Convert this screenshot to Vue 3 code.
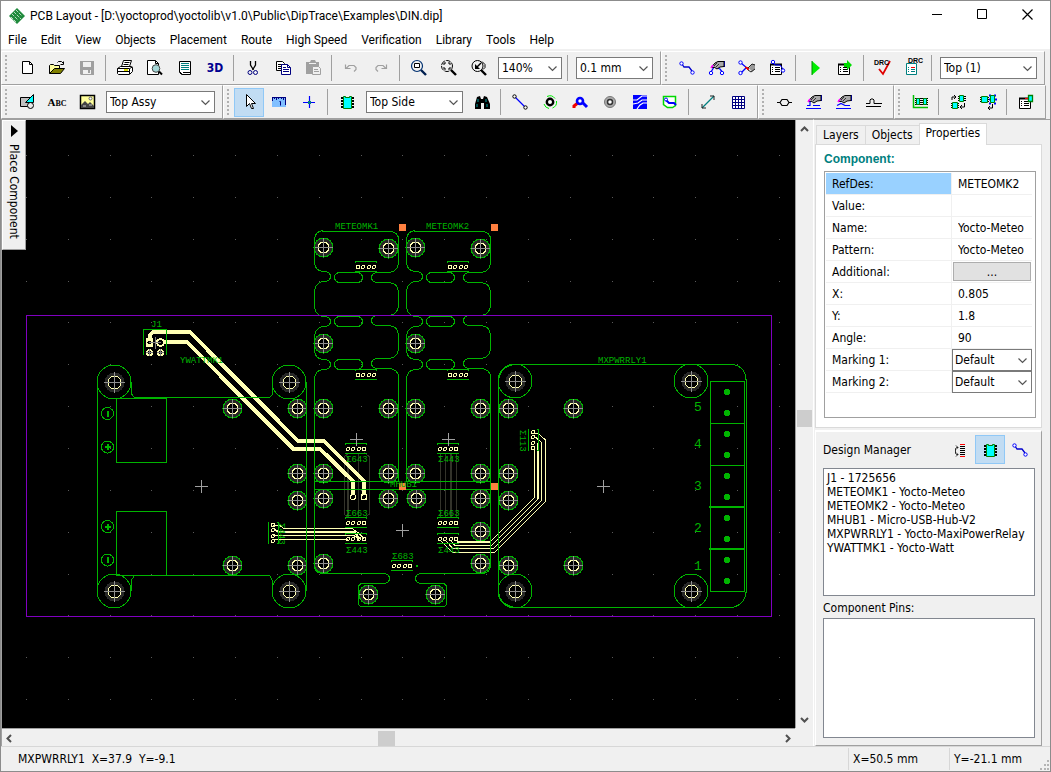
<script setup>
import { ref } from 'vue'

const menus = ['File', 'Edit', 'View', 'Objects', 'Placement', 'Route', 'High Speed', 'Verification', 'Library', 'Tools', 'Help']

const btn = (icon, label, active = false) => ({ type: 'button', icon, label, active })
const sep = { type: 'sep' }
const combo = (label, value, size) => ({ type: 'combo', label, value, size })

const toolbarRows = [
  [
    [
      btn('new', 'New'), btn('open', 'Open'), btn('save', 'Save'), sep,
      btn('print', 'Print'), btn('preview', 'Preview'), btn('titles', 'Titles'), { type: 'text', text: '3D', look: 'three-d' }, sep,
      btn('cut', 'Cut'), btn('copy', 'Copy'), btn('paste', 'Paste'), sep,
      btn('undo', 'Undo'), btn('redo', 'Redo'), sep,
      btn('zoom-window', 'Zoom window'), btn('zoom-all', 'Zoom all'), btn('zoom-back', 'Zoom back'),
      combo('Scale', '140%', 'xs'), sep, combo('Grid', '0.1 mm', 'sm')
    ],
    [
      btn('route', 'Route'), btn('edit-route', 'Edit route'), btn('cut-route', 'Cut route'), btn('route-props', 'Route properties'), sep,
      btn('run', 'Run autorouter'), btn('run-props', 'Autorouter setup'), sep,
      { ...btn('drc', 'Check DRC'), caption: 'DRC' }, { ...btn('drc-props', 'DRC rules'), caption: 'DRC', shifted: true }, sep,
      combo('Layer', 'Top (1)', 'md')
    ]
  ],
  [
    [btn('shapes', 'Shapes'), { type: 'text', text: 'Abc', look: 'abc' }, btn('picture', 'Picture'), combo('Drawing layer', 'Top Assy', 'lg')],
    [
      btn('pointer', 'Select', true), btn('ruler', 'Measure'), btn('origin', 'Origin'), sep,
      btn('chip', 'Place component'), combo('Side', 'Top Side', 'md'), btn('find', 'Find'), sep,
      btn('ratline', 'Ratline'), btn('via', 'Via'), btn('pad-route', 'Pad route'), btn('pad', 'Pad'), btn('pour', 'Copper pour'), btn('outline', 'Outline'), sep,
      btn('distance', 'Dimension'), btn('grid', 'Table')
    ],
    [btn('pair', 'Pair'), btn('pair-edit', 'Edit pair'), btn('pair-free', 'Free edit'), btn('meander', 'Meander')],
    [btn('arrange', 'Arrange'), sep, btn('place-run', 'Place run'), btn('place-auto', 'Auto placement'), sep, btn('place-props', 'Placement setup')]
  ]
]

const tabs = ['Layers', 'Objects', 'Properties']
const activeTab = ref('Properties')
const properties = [
  { id: 'refdes', label: 'RefDes:', value: 'METEOMK2', kind: 'input', selected: true },
  { id: 'value', label: 'Value:', value: '', kind: 'input' },
  { id: 'name', label: 'Name:', value: 'Yocto-Meteo', kind: 'input' },
  { id: 'pattern', label: 'Pattern:', value: 'Yocto-Meteo', kind: 'input' },
  { id: 'additional', label: 'Additional:', value: '...', kind: 'button' },
  { id: 'x', label: 'X:', value: '0.805', kind: 'input' },
  { id: 'y', label: 'Y:', value: '1.8', kind: 'input' },
  { id: 'angle', label: 'Angle:', value: '90', kind: 'input' },
  { id: 'm1', label: 'Marking 1:', value: 'Default', kind: 'select' },
  { id: 'm2', label: 'Marking 2:', value: 'Default', kind: 'select' }
]
const components = [
  'J1 - 1725656', 'METEOMK1 - Yocto-Meteo', 'METEOMK2 - Yocto-Meteo',
  'MHUB1 - Micro-USB-Hub-V2', 'MXPWRRLY1 - Yocto-MaxiPowerRelay', 'YWATTMK1 - Yocto-Watt'
]

/* Board geometry, in canvas units */
const gridDots = []
for (let r = 0; r < 14; r++) {
  for (let c = 0; c < 19; c++) {
    gridDots.push({ x: 26 + Math.round(c * 41.83), y: 155 + Math.round(r * 41.85) })
  }
}
const smallHoles = [
  [232, 408], [297, 408], [297, 473], [297, 500], [232, 565], [297, 565],
  [323, 247], [388, 248], [323, 343], [323, 408], [388, 408], [323, 473], [388, 473],
  [415, 247], [480, 248], [415, 343], [415, 408], [480, 408], [415, 473], [480, 473],
  [323, 498], [388, 498], [416, 498], [480, 498], [480, 531], [323, 563], [480, 563], [368, 594], [435, 594],
  [508, 408], [573, 408], [508, 473], [508, 500], [508, 565], [573, 565]
]
const bigHoles = [[114, 382], [289, 382], [114, 591], [289, 591], [515, 381], [691, 381], [515, 591], [691, 591]]
const headers = [
  { x: 366, y: 267, lead: true }, { x: 458, y: 267, lead: true },
  { x: 366, y: 375, lead: true }, { x: 458, y: 375, lead: true },
  { x: 356, y: 449 }, { x: 448, y: 449 }, { x: 356, y: 523 }, { x: 448, y: 523 },
  { x: 356, y: 539 }, { x: 448, y: 539 }, { x: 402, y: 566 },
  { x: 273, y: 533, turn: 90, lead: true }, { x: 533, y: 440, turn: 90 }
]
const crosses = [[202, 487], [357, 440], [449, 440], [403, 531], [604, 487]]
const anchors = [[399, 224], [491, 224], [399, 483], [491, 483]]
const terminals = [392, 413, 434, 455, 476, 497, 518, 539, 560, 581]
const designators = [
  ['J1', 151, 327], ['METEOMK1', 335, 229], ['METEOMK2', 426, 229], ['YWATTMK1', 180, 363],
  ['MXPWRRLY1', 598, 363], ['MHUB1', 390, 487],
  ['Σ643', 346, 462], ['Σ443', 438, 462], ['Σ663', 346, 516], ['Σ663', 438, 516],
  ['Σ443', 346, 553], ['Σ443', 438, 553], ['Σ683', 392, 559]
]
const relayNumbers = [['5', 411], ['4', 448], ['3', 490], ['2', 532], ['1', 570]]
</script>

<template>
  <div class="window">
    <svg class="defs" width="0" height="0" aria-hidden="true">
      <symbol id="i-new" viewBox="0 0 20 20"><path d="M5.500 3.500h7l3 3v9h-10z" fill="#fff" stroke="#000" /><path d="M12.500 3.500v3h3" fill="none" stroke="#000" /></symbol>
      <symbol id="i-open" viewBox="0 0 20 20"><path d="M2.500 15.500v-8l1-1h3l1 1h5v3" fill="#ffff9c" stroke="#000" /><path d="M2.500 15.500l5-5h10l-4 5z" fill="#808000" stroke="#000" /><path d="M10.500 4.500l1-1h3l2 2m0-2v3h-3" fill="none" stroke="#000" /></symbol>
      <symbol id="i-save" viewBox="0 0 20 20"><path d="M3 3h14v14H4l-1-1z" fill="#a0a0a0" /><path d="M6 4h8v5H6zM6 12h8v4H6z" fill="#f0f0f0" /><path d="M11 12h2v3h-2z" fill="#a0a0a0" /></symbol>
      <symbol id="i-print" viewBox="0 0 20 20"><path d="M6.500 8.500l2-6h8l-2 6z" fill="#fff" stroke="#000" /><path d="M9.500 4.500h5M8.500 6.500h5" stroke="#000" /><path d="M2.500 10.500l3-2h11l1 1v4l-3 3h-11l-1-1z" fill="#fff" stroke="#000" /><path d="M2.500 10.500h12l3-1.500M14.500 11v5M3 13.500h11" fill="none" stroke="#000" /><path d="M9 11h4v2H9z" fill="#e0e000" /></symbol>
      <symbol id="i-preview" viewBox="0 0 20 20"><path d="M2.500 2.500h8l3 3v11h-11z" fill="#fff" stroke="#000" /><path d="M10.500 2.500v3h3" fill="none" stroke="#000" /><circle cx="11" cy="10.500" r="3.800" fill="#a5d8d8" stroke="#444" /><path d="M14 13.500l3 3" stroke="#000" stroke-width="2" /></symbol>
      <symbol id="i-titles" viewBox="0 0 20 20"><path d="M4.500 3.500h11v13h-9l-2-2z" fill="#fff" stroke="#000" /><path d="M6 5.500h8M6 7.500h8M6 9.500h8M6 11.500h8" stroke="#008080" /><path d="M8 14.500h7M4.500 13.500l3 3" stroke="#000" /></symbol>
      <symbol id="i-cut" viewBox="0 0 20 20"><path d="M7.500 3v4l3 5M12.500 3v4l-3 5" fill="none" stroke="#000" stroke-width="1.300" /><circle cx="7" cy="14.500" r="2" fill="none" stroke="#000080" /><circle cx="12.500" cy="14.500" r="2" fill="none" stroke="#000080" /></symbol>
      <symbol id="i-copy" viewBox="0 0 20 20"><path d="M3.500 3.500h6l2 2v7h-8z" fill="#fff" stroke="#000" /><path d="M5 6.500h4M5 8.500h3M5 10.500h3" stroke="#000" /><path d="M8.500 6.500h6l3 3v7h-9z" fill="#fff" stroke="#000080" /><path d="M14.500 6.500v3h3M10 9.500h3M10 11.500h6M10 13.500h6" fill="none" stroke="#000080" /></symbol>
      <symbol id="i-paste" viewBox="0 0 20 20"><path d="M3 4h4l1-2h4l1 2h3v12H3z" fill="#a0a0a0" /><path d="M6 5h7v1H6z" fill="#f0f0f0" /><path d="M9.500 8.500h6l2 2v6h-8z" fill="#f0f0f0" stroke="#a0a0a0" /><path d="M11 11.500h4M11 13.500h5" stroke="#a0a0a0" /></symbol>
      <symbol id="i-undo" viewBox="0 0 20 20"><path d="M5 10.500l3-3h5l2 2v2l-2 2M4.500 6.500v4h5" fill="none" stroke="#a0a0a0" stroke-width="1.200" /></symbol>
      <symbol id="i-redo" viewBox="0 0 20 20"><path d="M15 10.500l-3-3H7l-2 2v2l2 2M15.500 6.500v4h-5" fill="none" stroke="#a0a0a0" stroke-width="1.200" /></symbol>
      <symbol id="i-zoom-window" viewBox="0 0 20 20"><circle cx="8" cy="8" r="5.500" fill="none" stroke="#003070" stroke-width="1.200" /><path d="M5.500 5.500h5v4h-5z" fill="#fff" stroke="#000" /><path d="M12 12l5 5" stroke="#002050" stroke-width="2.400" /></symbol>
      <symbol id="i-zoom-all" viewBox="0 0 20 20"><circle cx="8" cy="8" r="5.500" fill="none" stroke="#000" stroke-dasharray="5 1" /><path d="M5 7V5h2M9 5h2v2M5 9v2h2M11 9v2H9" fill="none" stroke="#000" /><path d="M12 12l5 5" stroke="#000" stroke-width="2.400" /></symbol>
      <symbol id="i-zoom-back" viewBox="0 0 20 20"><circle cx="8.500" cy="8" r="5.500" fill="none" stroke="#000" /><path d="M13 3.500l3 3v3l-2 2" fill="none" stroke="#000" /><path d="M6 6v5h5z" fill="#000" /><path d="M7 10l5-5" stroke="#000" stroke-width="1.500" /><path d="M12 12l5 5" stroke="#000" stroke-width="2.400" /></symbol>
      <symbol id="i-route" viewBox="0 0 20 20"><path d="M5 6l2 3h5l3 4" fill="none" stroke="#00c" stroke-width="1.300" /><circle cx="4.500" cy="5.500" r="1.700" fill="#fff" stroke="#00f" /><circle cx="15.500" cy="14.500" r="1.700" fill="#fff" stroke="#00f" /></symbol>
      <symbol id="i-hand" viewBox="0 0 20 20"><path d="M5 8.500l3-3.500 3-1.500h6v5l-4 .5-3 2-3-2-1 1z" fill="#a8a8a8" stroke="#000" /><path d="M7 8l3-3M9 9l3-3" stroke="#333" /><path d="M17.500 3v6" stroke="#000080" /><path d="M4 10l2-3" stroke="#f0f" stroke-width="1.500" /></symbol>
      <symbol id="i-edit-route" viewBox="0 0 20 20"><path d="M4 14l3-5 6 2 3 4" fill="none" stroke="#00f" stroke-width="1.300" /><use href="#i-hand" width="20" height="20" /><circle cx="4" cy="15" r="1.700" fill="#fff" stroke="#00f" /><circle cx="15" cy="15" r="1.700" fill="#fff" stroke="#00f" /></symbol>
      <symbol id="i-cut-route" viewBox="0 0 20 20"><path d="M4 5l6 5h-1l-5 5" fill="none" stroke="#00f" stroke-width="1.300" /><path d="M8 9l4 1-1 2z" fill="#e00" stroke="#e00" /><circle cx="3.500" cy="4.500" r="1.700" fill="#fff" stroke="#00f" /><circle cx="3.500" cy="15" r="1.700" fill="#fff" stroke="#00f" /><path d="M12 10l3-4h3v5l-3 3z" fill="#999" /><path d="M11 10l4-4 3 1M11 12l3 2 4-3" fill="none" stroke="#222" /></symbol>
      <symbol id="i-sheet" viewBox="0 0 20 20"><path d="M3.500 6.500h11v10h-11z" fill="#fff" stroke="#000" /><path d="M3 5.500h12v2H3z" fill="#000" /><path d="M5 9.500h1M5 11.500h1M5 13.500h1M8 9.500h5M8 11.500h5M8 13.500h5" stroke="#000" /></symbol>
      <symbol id="i-route-props" viewBox="0 0 20 20"><use href="#i-sheet" width="20" height="20" /><path d="M6 4l2 3h5l3 4" fill="none" stroke="#00f" /><circle cx="6" cy="4" r="1.700" fill="#fff" stroke="#00f" /><circle cx="16" cy="12.500" r="1.700" fill="#fff" stroke="#00f" /></symbol>
      <symbol id="i-run" viewBox="0 0 20 20"><path d="M7 3l8 7-8 7z" fill="#0e0" /><path d="M7 3v14" stroke="#080" /></symbol>
      <symbol id="i-run-props" viewBox="0 0 20 20"><use href="#i-sheet" width="20" height="20" /><path d="M9 5h3V2l5 5-5 5V9H9z" fill="#0d0" /></symbol>
      <symbol id="i-drc" viewBox="0 0 20 20"><path d="M6 11l4 5 7-13" fill="none" stroke="#e00000" stroke-width="1.800" /></symbol>
      <symbol id="i-drc-props" viewBox="0 0 20 20"><path d="M3.500 5.500h10v11h-10z" fill="#fff" stroke="#008080" /><path d="M5 9.500h1M5 11.500h1M5 13.500h1M8 11.500h4M8 13.500h4" stroke="#008080" /><path d="M8 9.500h4" stroke="#e00" /></symbol>
      <symbol id="i-shapes" viewBox="0 0 20 20"><path d="M3.500 5.500h10v9h-10z" fill="#c0c0c0" stroke="#000" /><path d="M16.500 2.500v8h-8z" fill="#0ff" stroke="#000" /><circle cx="13.500" cy="13.500" r="3" fill="#e8e8e8" stroke="#000" /></symbol>
      <symbol id="i-picture" viewBox="0 0 20 20"><path d="M3.500 3.500h14v13h-14z" fill="#ffff9c" stroke="#000" stroke-width="1.500" /><circle cx="13.500" cy="6.500" r="1.500" fill="#fff" stroke="#666" /><path d="M4 13l4-4 3 3 2-2 4 4v2H4z" fill="#444" /><path d="M6 14h3M12 13h3" stroke="#ccc" /></symbol>
      <symbol id="i-pointer" viewBox="0 0 20 20"><path d="M7.500 2.500v12l3-3 2 5h2l-2-5h4z" fill="#fff" stroke="#000" /></symbol>
      <symbol id="i-ruler" viewBox="0 0 20 20"><path d="M3 5h14v10H3z" fill="#80bfff" /><path d="M3 5.500h14M3.500 5v4M5.500 5v2M7.500 5v3M9.500 5v2M12.500 5v2M14.500 5v3M16.500 5v8M10.500 9.500h1v4" fill="none" stroke="#000080" /></symbol>
      <symbol id="i-origin" viewBox="0 0 20 20"><path d="M4 10.500h12M10.500 4v12" stroke="#0000ff" stroke-width="1.200" /><path d="M9 9h3v3H9z" fill="#008080" /></symbol>
      <symbol id="i-chip" viewBox="0 0 20 20"><path d="M4 6h13M4 9h13M4 12h13M4 15h13" stroke="#000" stroke-width="2" /><path d="M6.500 4.500h2v1h4v-1h2v12h-8z" fill="#0ff" stroke="#008000" /></symbol>
      <symbol id="i-find" viewBox="0 0 20 20"><path d="M5 5l3-1 1 3h2l1-3 3 1 3 7v5h-6v-6H9v6H3v-5z" fill="#000" /><path d="M6 7v3M14 7v3M5 12v3M15 12v3" stroke="#00a0a0" /></symbol>
      <symbol id="i-ratline" viewBox="0 0 20 20"><path d="M5 5l10 10" stroke="#00f" stroke-width="1.200" /><circle cx="4.500" cy="4.500" r="1.700" fill="#fff" stroke="#000" /><circle cx="15.500" cy="15.500" r="1.700" fill="#fff" stroke="#000" /></symbol>
      <symbol id="i-via" viewBox="0 0 20 20"><path d="M7 4.500a6.500 6.500 0 0 1 8 2M16.500 9a6.500 6.500 0 0 1-4 7M4 12a6.500 6.500 0 0 0 5 4.500" fill="none" stroke="#0e0" /><circle cx="10" cy="10" r="3.200" fill="#fff" stroke="#000" stroke-width="2.400" /></symbol>
      <symbol id="i-pad-route" viewBox="0 0 20 20"><path d="M9 10l-5 4v2" fill="none" stroke="#f00000" stroke-width="3" /><path d="M11 9l6 6" stroke="#00f" stroke-width="3" /><circle cx="10" cy="9" r="3" fill="#fff" stroke="#00f" stroke-width="2.600" /></symbol>
      <symbol id="i-pad" viewBox="0 0 20 20"><circle cx="10" cy="10" r="5.500" fill="#aaa" stroke="#777" /><circle cx="10" cy="10" r="2.500" fill="#fff" stroke="#333" stroke-width="1.500" /></symbol>
      <symbol id="i-pour" viewBox="0 0 20 20"><path d="M3 3h14v14H3z" fill="#00f" /><path d="M3 8h4l5-4h5M3 12l5-1 4-3h5M7 17l3-4 3-2h4" fill="none" stroke="#fff" stroke-width="1.200" /></symbol>
      <symbol id="i-outline" viewBox="0 0 20 20"><path d="M3.500 4.500h12v9l-3 2h-5l-4-3z" fill="#fff" stroke="#00d800" stroke-width="1.500" /><path d="M6 8l3 3h5l2 2" fill="none" stroke="#00f" stroke-width="2" /><circle cx="6" cy="7.500" r="1.500" fill="#fff" stroke="#00f" /></symbol>
      <symbol id="i-distance" viewBox="0 0 20 20"><path d="M4 16L16 4" stroke="#008080" stroke-width="1.300" /><path d="M12 4h4v4M4 12v4h4" fill="none" stroke="#222" /></symbol>
      <symbol id="i-grid" viewBox="0 0 20 20"><path d="M4.500 4.500h12v12h-12zM7.500 4v12M10.500 4v12M13.500 4v12M4 7.500h12M4 10.500h12M4 13.500h12" fill="#fff" stroke="#000080" /></symbol>
      <symbol id="i-pair" viewBox="0 0 20 20"><path d="M3 10.500h3l2-3h5l2 3h3M6 10.500l2 3h5l2-3" fill="none" stroke="#000" stroke-width="1.200" /></symbol>
      <symbol id="i-pair-edit" viewBox="0 0 20 20"><use href="#i-hand" width="20" height="20" /><path d="M2 16.500h15M3 13.500h3v-4M9 13.500h7" fill="none" stroke="#00f" stroke-width="1.200" /></symbol>
      <symbol id="i-pair-free" viewBox="0 0 20 20"><use href="#i-hand" width="20" height="20" /><path d="M2 16.500h15M3 13.500l4-2 4 2h5" fill="none" stroke="#00f" stroke-width="1.200" /></symbol>
      <symbol id="i-meander" viewBox="0 0 20 20"><path d="M2 11.500h4V8l1-1h2l1 1v3.500h8M2 14.500h15" fill="none" stroke="#000" /></symbol>
      <symbol id="i-arrange" viewBox="0 0 20 20"><path d="M3.500 3v12.500H18" fill="none" stroke="#00c000" stroke-width="1.500" /><path d="M5 6.500h13M5 8.500h13M5 10.500h13M5 12.500h13" stroke="#000" /><path d="M6.500 6.500h3v6h-3zM13.500 6.500h3v6h-3z" fill="#0ff" stroke="#008000" /></symbol>
      <symbol id="i-place-run" viewBox="0 0 20 20"><path d="M3 11.500h8M3 13.500h8M3 15.500h8M10 4.500h8M10 6.500h8M10 8.500h8" stroke="#000" /><path d="M4.500 10.500h5v6h-5zM11.500 3.500h4v6h-4z" fill="#0ff" stroke="#008000" /><path d="M4 8V5h4M6 3l2 2-2 2M16.500 11v4h-4M14 13l-2 2 2 2" fill="none" stroke="#000" /></symbol>
      <symbol id="i-place-auto" viewBox="0 0 20 20"><path d="M2 5.500h9M2 7.500h9M2 9.500h9" stroke="#000" /><path d="M11 3.500h2M16 3.500h2M11 7.500h8M11 11.500h2M16 11.500h2" stroke="#00f" stroke-width="2" /><path d="M3.500 4.500h6v6h-6zM12.500 3.500h4v7h-4z" fill="#0ff" stroke="#008000" /><path d="M14.500 12v4h-4M12 14l-2 2 2 2" fill="none" stroke="#000" /></symbol>
      <symbol id="i-place-props" viewBox="0 0 20 20"><use href="#i-sheet" width="20" height="20" /><path d="M9 6.500h3" stroke="#f00" /><path d="M12.500 3.500h4v6h-4z" fill="#0ff" stroke="#008000" stroke-width="1.300" /></symbol>
      <symbol id="i-sort" viewBox="0 0 20 20"><path d="M10 4.500h5M10 16.500h5" stroke="#f00" /><path d="M10 6.500h5M10 8.500h5M10 10.500h5M10 12.500h5M10 14.500h5" stroke="#000" /><path d="M8 7.500H6.500l-1 1v5l1 1H8M6 5.500l2 2-2 2M6 12.500l2 2-2 2" fill="none" stroke="#000" stroke-width=".8" /></symbol>
      <symbol id="i-chevron" viewBox="0 0 9 6"><path d="M.5.500l4 4 4-4" fill="none" stroke="#555" stroke-width="1.200" /></symbol>
      <symbol id="b-hole" viewBox="-11 -11 22 22">
        <circle cx=".5" cy=".5" r="9.500" fill="#282828" stroke="#00b400" /><circle cx=".5" cy=".5" r="5.500" fill="#000" stroke="#ffffb4" /><path d="M-9 .5H10M.5-9V10" stroke="#909090" />
      </symbol>
      <symbol id="b-big-hole" viewBox="-18 -18 36 36">
        <circle r="17" fill="#000" stroke="#00b400" /><circle cx=".5" cy=".5" r="10" fill="#282828" /><circle cx=".5" cy=".5" r="6.500" fill="#000" stroke="#ffffb4" /><path d="M-10 .5H11M.5-10V11" stroke="#909090" />
      </symbol>
    </svg>

    <header class="titlebar">
      <svg class="logo" viewBox="0 0 18 18" width="18" height="18"><path d="M9 1l8 8-8 8-8-8z" fill="#1f8a3c" /><path d="M4 7l6 6M6 5l7 7M8 3l6 6M3 10l5 5" stroke="#b9dfc2" stroke-dasharray="3 1" /></svg>
      <h1>PCB Layout - [D:\yoctoprod\yoctolib\v1.0\Public\DipTrace\Examples\DIN.dip]</h1>
      <div class="controls">
        <button aria-label="Minimize"><svg width="11" height="11"><path d="M0 5.500h10" stroke="#000" /></svg></button>
        <button aria-label="Maximize"><svg width="11" height="11"><path d="M.5.500h9v9h-9z" fill="none" stroke="#000" /></svg></button>
        <button aria-label="Close"><svg width="11" height="11"><path d="M.5.500l10 10M10.500.500l-10 10" stroke="#000" stroke-width="1.200" /></svg></button>
      </div>
    </header>

    <nav class="menubar">
      <button v-for="m in menus" :key="m">{{ m }}</button>
    </nav>

    <div v-for="(row, r) in toolbarRows" :key="r" class="toolbar-row">
      <div v-for="(bar, b) in row" :key="b" class="toolbar" role="toolbar">
        <span class="grip"></span>
        <template v-for="(item, i) in bar" :key="i">
          <span v-if="item.type === 'sep'" class="sep"></span>
          <button v-else-if="item.type === 'text'" class="tool" :class="item.look">{{ item.text }}</button>
          <span v-else-if="item.type === 'combo'" class="combo" :class="item.size">
            <select :aria-label="item.label"><option>{{ item.value }}</option></select>
            <svg width="9" height="6"><use href="#i-chevron" /></svg>
          </span>
          <button v-else class="tool" :class="{ active: item.active }" :aria-label="item.label">
            <svg width="20" height="20"><use :href="'#i-' + item.icon" /></svg>
            <span v-if="item.caption" class="caption" :class="{ shifted: item.shifted }">{{ item.caption }}</span>
          </button>
        </template>
      </div>
    </div>

    <main class="workspace">
      <section class="canvas-pane">
        <div class="canvas">
          <svg class="board" width="100%" height="100%">
            <g transform="translate(-2 -120)" shape-rendering="crispEdges">
              <rect v-for="(d, i) in gridDots" :key="i" :x="d.x" :y="d.y" width="1" height="1" fill="#5a5a5a" />
              <g fill="none" stroke="#33332a">
                <path d="M349 453l-5 4v57l5 4M358.500 454v64M364 452l5.500 5v57l-5 4M440.500 454v64M445.500 454v64M456.500 454v64" />
                <path d="M348 456v62M451 454v64" stroke-width="2" />
              </g>
              <use v-for="(h, i) in bigHoles" :key="'b' + i" href="#b-big-hole" :x="h[0] - 18" :y="h[1] - 18" width="36" height="36" />
              <use v-for="(h, i) in smallHoles" :key="'s' + i" href="#b-hole" :x="h[0] - 11" :y="h[1] - 11" width="22" height="22" />

              <g fill="none" stroke="#ffffb4">
                <path d="M150 344v-9l3-3h37l108 109h26l40 40v15M160 342h27l106.500 107h26.500l33 32v15" stroke-width="4" />
                <path d="M273 525h6l5 3.500h68l6 4 6 6M273 535.500h81l5 4M273 539.500h75" />
                <path d="M275 530l5 2h75l4 7" stroke-width="2" />
                <path d="M457 542h33l44.500-44.500V450" /><path d="M457 542h33" stroke-width="2" />
                <path d="M450 540l5 5.500h36.500L538 499" /><path d="M538 499v-56" stroke-width="2" />
                <path d="M445 540l8 8.500h40.500l48-48v-58l-8-7M440 540l12 12h43l50.500-50.500V440l-8-7h-5" />
              </g>

              <g fill="none" stroke="#00b400">
                <path d="M97.500 382v209M306.500 382v209M131.500 382v12l3 3.500h135l3-3V382M131.500 591v-11l3-4.500h135l3 5v10.500" />
                <path d="M116.500 398.500h50v64h-50zM116.500 511.500h50v64h-50z" />
                <circle cx="107.500" cy="413.500" r="6" /><circle cx="107.500" cy="447" r="6" /><circle cx="107.500" cy="526.500" r="6" /><circle cx="107.500" cy="560" r="6" />
                <path d="M107.500 411v6M107.500 557v6" stroke-width="2" /><path d="M104.500 447h6M107.500 444v6M104.500 526.500h6M107.500 523.500v6" stroke-width="2" />
                <g v-for="dx in [0, 92]" :key="dx" :transform="`translate(${dx} 0)`">
                  <path d="M322.500 231.500h68q8 1 8 8v24q-1 8-9 9h-13q-5 1-5 5t5 5h13q8 1 9 9v14q-1 9-9 10h-13q-5 1-5 5t5 5h13q8 1 9 9v15q-1 8-9 9h-13q-5 1-5 5t5 5h13q9 1 9 9v103.500h-84V378.500q1-8 8-9h3q5-1 5-5t-5-5h-3q-7-1-8-8v-16q1-7 8-9h3q5-1 5-5t-5-5h-3q-7-2-8-9v-17q1-7 8-9h3q5-1 5-5t-5-5h-3q-7-1-8-8v-25q1-7 8-8z" />
                  <rect x="334.500" y="272.500" width="28" height="10" rx="5" /><rect x="334.500" y="316.500" width="28" height="10" rx="5" /><rect x="334.500" y="359.500" width="28" height="10" rx="5" />
                </g>
                <path d="M314.500 489.500h176v77q-1 6-7 7h-63q-5 1-5 5t5 5h22q4 0 4 4v15q0 4-4 4h-80q-4 0-4-4v-15q0-4 4-4h22q5-1 5-5t-5-5h-63q-7-1-7-7zM314.500 480v10M490.500 480v10" />
                <path d="M515 364.500h218q12 2 13 15v213q-1 12-14 15H515q-16-3-16.500-16V381q1-15 16.500-16.500z" />
                <path d="M710.500 381.500h34v210h-34zM710 423.500h34M710 465.500h34" /><path d="M709 507h35M709 549h35" stroke-width="2" />
                <path d="M143.500 355v-25.500h23V355" />
              </g>
              <g fill="#00b400"><circle v-for="y in terminals" :key="y" cx="727" :cy="y" r="3" /><rect x="416" y="565" width="2" height="2" /></g>

              <g v-for="(h, i) in headers" :key="'h' + i" :transform="`translate(${h.x} ${h.y}) rotate(${h.turn || 0})`" fill="none">
                <path d="M-10.500-4v-1.500h21V-4M-10.500 4v.5h21V4" stroke="#00b400" />
                <g stroke="#ffffb4">
                  <rect v-for="p in [-4.500, 1.500]" :key="p" :x="p" y="-1.500" width="3" height="3" rx="1.500" />
                  <rect :x="h.lead ? 6.500 : -9.500" y="-1.500" width="3" height="3" rx="1.500" />
                  <rect :x="h.lead ? -9.500 : 6.500" y="-1.500" width="3" height="3" />
                </g>
              </g>

              <g fill="#ffffb4">
                <rect x="146" y="338" width="7" height="9" /><circle cx="160.500" cy="342.500" r="4.500" /><circle cx="149.500" cy="352.500" r="3.500" /><circle cx="160.500" cy="352.500" r="3.500" />
                <circle cx="353" cy="497" r="3" /><rect x="361" y="494" width="6" height="6" />
              </g>
              <g fill="#000"><circle cx="149.500" cy="342.500" r="2" /><circle cx="160.500" cy="342.500" r="2.500" /><circle cx="353" cy="497" r="2" /><circle cx="364" cy="497" r="2" /><circle cx="149.500" cy="352.500" r="2" /><circle cx="160.500" cy="352.500" r="2" /></g>
              <path d="M149 342.500h12M155.500 337v12M146 352.500h7M149.500 349v7M157 352.500h7M160.500 349v7" stroke="#808080" />
              <path v-for="(c, i) in crosses" :key="'c' + i" :d="`M${c[0] - 7} ${c[1] - 0.5}h13M${c[0] - 0.5} ${c[1] - 7}v13`" stroke="#a0a0a0" />
              <rect v-for="(a, i) in anchors" :key="'a' + i" :x="a[0]" :y="a[1]" width="7" height="7" fill="#ff8040" />
              <rect x="26.500" y="315.500" width="745" height="301" fill="none" stroke="#8000c0" />
              <g class="silk">
                <text v-for="(t, i) in designators" :key="'t' + i" :x="t[1]" :y="t[2]">{{ t[0] }}</text>
                <text transform="translate(279 523) rotate(90)">Σ443</text>
                <text transform="translate(520 430) rotate(90)">Σ113</text>
                <text v-for="n in relayNumbers" :key="n[0]" class="relay" x="694" :y="n[1]">{{ n[0] }}</text>
              </g>
            </g>
          </svg>
          <button class="place-tab"><span class="triangle"></span><span>Place Component</span></button>
        </div>
        <div class="scroll vertical">
          <svg width="9" height="6"><path d="M1 5l3.500-3.500L8 5" fill="none" stroke="#505050" stroke-width="2" /></svg>
          <span class="thumb"></span>
          <svg width="9" height="6"><path d="M1 1l3.500 3.500L8 1" fill="none" stroke="#505050" stroke-width="2" /></svg>
        </div>
        <div class="scroll horizontal">
          <svg width="6" height="9"><path d="M5 1L1.500 4.500 5 8" fill="none" stroke="#505050" stroke-width="2" /></svg>
          <span class="thumb"></span>
          <svg width="6" height="9"><path d="M1 1l3.500 3.500L1 8" fill="none" stroke="#505050" stroke-width="2" /></svg>
        </div>
      </section>

      <aside class="side">
        <div class="tabs" role="tablist">
          <button v-for="t in tabs" :key="t" role="tab" :aria-selected="t === activeTab" :class="{ active: t === activeTab }" @click="activeTab = t">{{ t }}</button>
        </div>
        <section class="page">
          <h2>Component:</h2>
          <div class="grid-box">
            <table>
              <tbody>
                <tr v-for="p in properties" :key="p.id">
                  <th scope="row" :class="{ selected: p.selected }"><label :for="'p-' + p.id">{{ p.label }}</label></th>
                  <td>
                    <input v-if="p.kind === 'input'" :id="'p-' + p.id" type="text" :value="p.value">
                    <button v-else-if="p.kind === 'button'" :id="'p-' + p.id" class="more">{{ p.value }}</button>
                    <span v-else class="combo cell">
                      <select :id="'p-' + p.id"><option>{{ p.value }}</option></select>
                      <svg width="9" height="6"><use href="#i-chevron" /></svg>
                    </span>
                  </td>
                </tr>
              </tbody>
            </table>
          </div>
        </section>

        <section class="manager">
          <div class="manager-head">
            <h3>Design Manager</h3>
            <button class="tool" aria-label="Sort"><svg width="20" height="20"><use href="#i-sort" /></svg></button>
            <button class="tool active" aria-label="Components"><svg width="20" height="20"><use href="#i-chip" /></svg></button>
            <button class="tool" aria-label="Nets"><svg width="20" height="20"><use href="#i-route" /></svg></button>
          </div>
          <ul class="list"><li v-for="c in components" :key="c">{{ c }}</li></ul>
          <h3 class="pins-title">Component Pins:</h3>
          <ul class="list pins"></ul>
        </section>
      </aside>
    </main>

    <footer class="status">
      <span class="where">MXPWRRLY1&nbsp; X=37.9&nbsp; Y=-9.1</span>
      <span class="coord">X=50.5 mm</span>
      <span class="coord">Y=-21.1 mm</span>
      <svg class="resize" width="10" height="10"><path d="M7 0h2v2h-2zM4 4h2v2h-2zM7 4h2v2h-2zM0 8h2v2h-2zM4 8h2v2h-2zM7 8h2v2h-2z" fill="#b4b4b4" /></svg>
    </footer>
  </div>
</template>

<style>
body { margin: 0; }
</style>

<style scoped>
* { box-sizing: border-box; }
.window {
  display: flex; flex-direction: column; height: 100vh; overflow: hidden;
  border: 1px solid #8c8c8c; background: #f0f0f0; color: #000;
  font: 12px/14px "DejaVu Sans Condensed", "DejaVu Sans", sans-serif;
}
.defs { position: absolute; }
button, select, input { font: inherit; color: inherit; margin: 0; padding: 0; border: 0; background: none; border-radius: 0; }
h1, h2, h3, ul { margin: 0; padding: 0; font-weight: 400; font-size: 12px; list-style: none; }

.titlebar { display: flex; align-items: center; height: 29px; flex: none; padding-left: 7px; background: #fff; }
.logo { margin-right: 4px; }
.titlebar h1 { flex: 1; font-family: Roboto, "Open Sans", sans-serif; }
.controls { display: flex; }
.controls button { width: 45px; height: 28px; }

.menubar { display: flex; height: 21px; flex: none; padding-left: 7px; gap: 14px; background: #fff; border-bottom: 2px solid #f0f0f0; font-family: Roboto, "Open Sans", sans-serif; }

.toolbar-row { display: flex; flex: none; height: 34px; }
.toolbar { display: flex; align-items: center; height: 34px; padding: 0 4px 0 3px; border: 1px solid #a0a0a0; border-top-color: #fff; border-left-color: #fff; }
.toolbar:has(.combo:last-child) { padding-right: 7px; }
.grip { width: 2px; height: 27px; margin-right: 5px; background: repeating-linear-gradient(#b0b0b0 0 2px, #f0f0f0 2px 4px); }
.tool { position: relative; width: 30px; height: 29px; flex: none; display: grid; place-items: center; }
.tool.active { background: #c1dcf3; border: 1px solid #90c8f6; }
.three-d { color: #000090; font-weight: 700; }
.abc { font: bold 11px/14px "Liberation Serif", serif; font-variant: small-caps; }
.caption { position: absolute; left: 6px; top: 5px; font: bold 7px/8px "Liberation Sans", sans-serif; }
.caption.shifted { left: 10px; top: 3px; }
.sep { width: 2px; height: 26px; margin: 0 3px; background: #a0a0a0; border-right: 1px solid #f0f0f0; }
.combo { position: relative; height: 22px; margin-left: 4px; background: #fff; border: 1px solid #7a7a7a; }
.combo svg { position: absolute; right: 4px; top: 8px; pointer-events: none; }
.combo select { appearance: none; width: 100%; height: 100%; padding-left: 3px; display: block; }
.combo.xs { width: 64px; margin-right: 2px; }
.combo.sm { width: 77px; }
.combo.md { width: 97px; }
.combo.md:not(:last-child) { margin-right: 4px; }
.combo.lg { width: 109px; }

.workspace { flex: 1; min-height: 0; display: flex; }
.canvas-pane { flex: 1; min-width: 0; display: grid; grid-template-columns: 1fr 18px; grid-template-rows: 1fr 18px; border-top: 1px solid #a0a0a0; border-left: 1px solid #a0a0a0; }
.canvas { position: relative; background: #000; overflow: hidden; }
.board { display: block; position: absolute; }
.silk { font: 9px "Liberation Mono", monospace; fill: #00b400; }
.relay { font-size: 13px; }
.place-tab { position: absolute; left: 0; top: 0; width: 24px; height: 130px; display: flex; flex-direction: column; align-items: center; gap: 7px; padding-top: 4px; background: #f0f0f0; border: 1px solid #fff; border-right-color: #a0a0a0; border-bottom-color: #a0a0a0; }
.place-tab span:last-child { writing-mode: vertical-rl; white-space: nowrap; }
.triangle { border: 6px solid transparent; border-left: 7px solid #000; border-right: 0; }
.scroll { display: flex; align-items: center; justify-content: space-between; }
.vertical { flex-direction: column; padding: 6px 0 5px; border-left: 1px solid #a0a0a0; }
.horizontal { padding: 1px 4px 0 4px; border-top: 1px solid #a0a0a0; }
.thumb { width: 15px; height: 17px; margin-bottom: 12px; background: #cdcdcd; }
.horizontal .thumb { width: 17px; height: 15px; margin: 0 24px 0 0; }

.side { width: 237px; flex: none; display: flex; flex-direction: column; padding: 3px 8px 0 1px; border-left: 1px solid #fff; border-top: 1px solid #a0a0a0; }
.tabs { display: flex; align-items: flex-end; height: 21px; padding-left: 1px; }
.tabs button { height: 19px; padding: 0 6px; border: 1px solid #dadada; border-bottom: 0; border-right: 0; }
.tabs button.active { position: relative; height: 22px; margin-bottom: -1px; padding-bottom: 3px; background: #fff; border-right: 1px solid #dadada; }
.page { padding: 7px 5px 9px 8px; background: #fff; border: 1px solid #dadada; }
.page h2 { font: bold 12px/15px "Liberation Sans", sans-serif; color: #008080; margin-bottom: 4px; }
.grid-box { height: 247px; padding: 1px 3px 0 1px; border: 1px solid #a0a0a0; }
table { width: 100%; table-layout: fixed; border-collapse: separate; border-spacing: 0; }
th, td { height: 22px; padding: 0; border-bottom: 1px solid #f0f0f0; font-weight: 400; text-align: left; }
th { width: 126px; padding-left: 6px; border-right: 1px solid #f0f0f0; }
th.selected { background: #99d1ff; }
td input { display: block; width: 100%; height: 20px; padding-left: 6px; }
.more { display: block; width: 78px; height: 19px; margin-left: 1px; background: #e1e1e1; border: 1px solid #adadad; }
.cell { display: block; height: 22px; margin: 0 0 -1px; border-color: #7a7a7a; }
.cell select { padding-left: 2px; }

.manager { flex: 1; min-height: 0; margin-top: 2px; padding: 3px 6px 7px 7px; display: flex; flex-direction: column; border: 1px solid #a0a0a0; border-top: 2px solid #fff; border-left-color: #fff; }
.manager-head { display: flex; align-items: center; margin-bottom: 4px; }
.manager-head h3 { flex: 1; }
.list { flex: 128; padding: 2px 3px; background: #fff; border: 1px solid #828790; white-space: nowrap; overflow: hidden; }
.pins-title { margin: 5px 0 3px; }
.list.pins { flex: 120; }

.status { display: flex; align-items: center; flex: none; height: 25px; padding-left: 17px; border-top: 1px solid #d7d7d7; position: relative; }
.where { flex: 1; }
.coord { width: 101px; padding-left: 4px; line-height: 22px; border-left: 1px solid #d7d7d7; }
.resize { position: absolute; right: 0; bottom: 1px; }
</style>
